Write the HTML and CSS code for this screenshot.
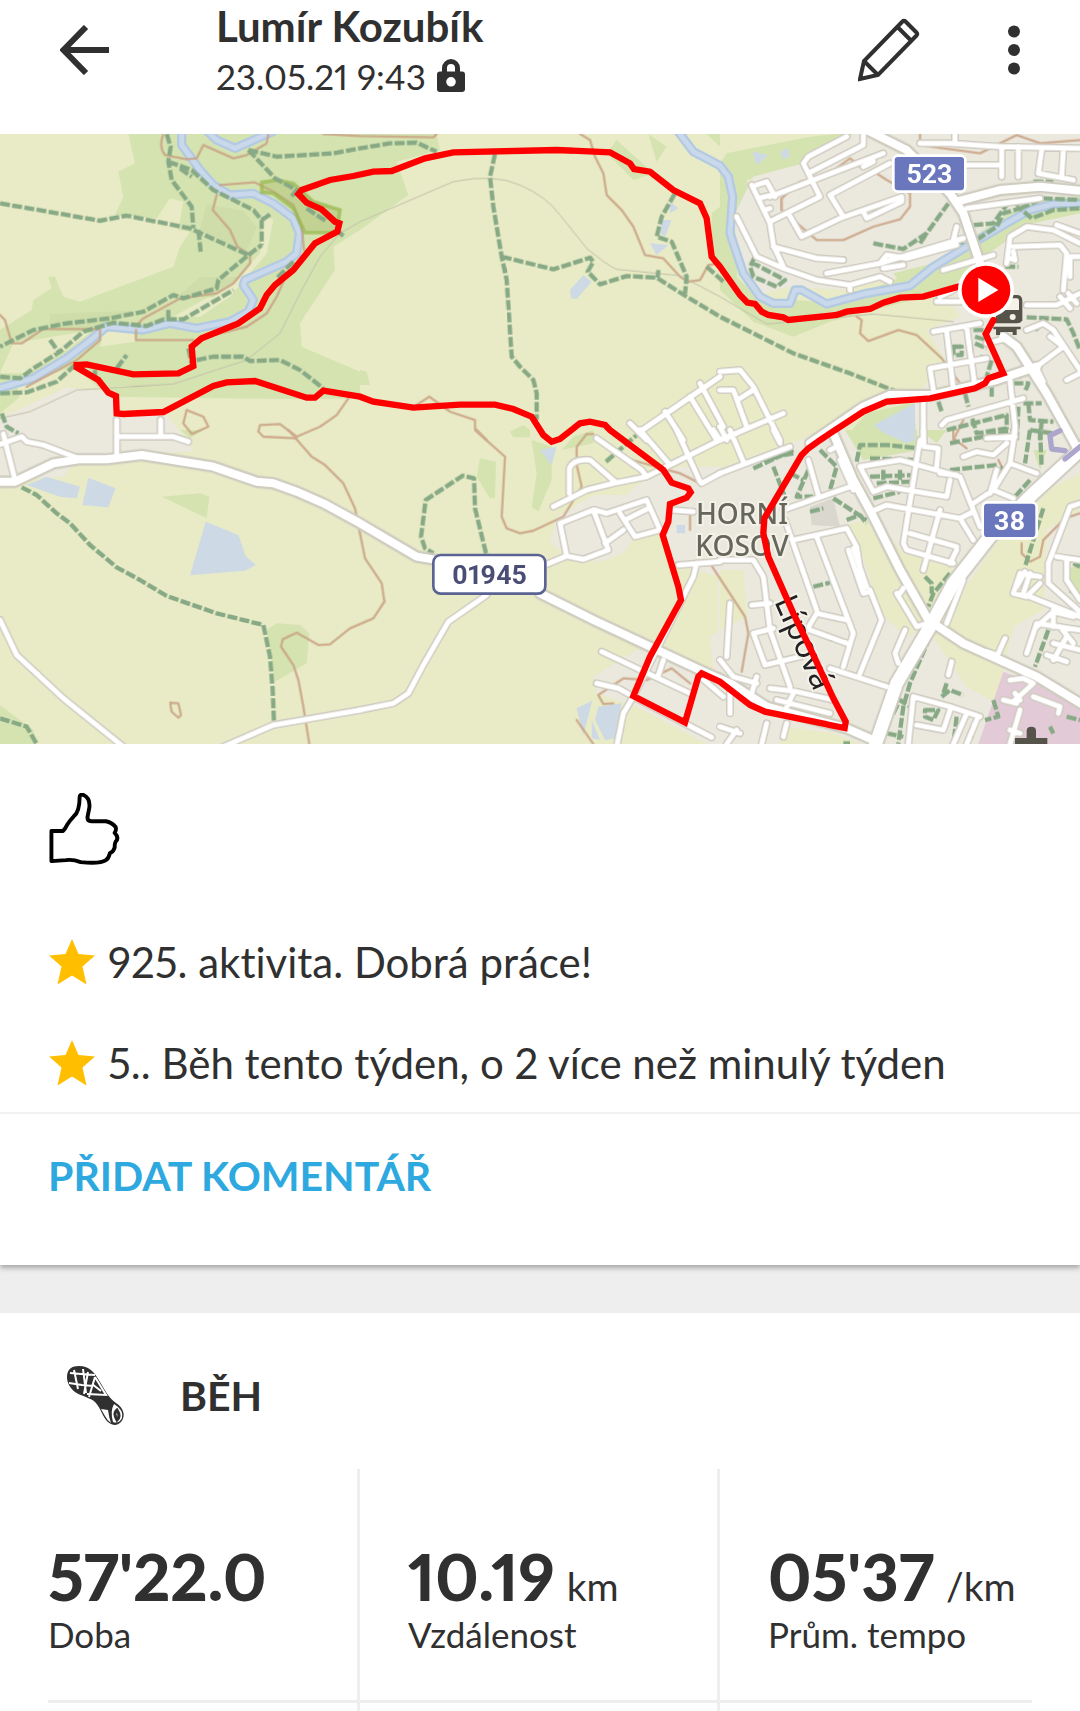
FILE: index.html
```html
<!DOCTYPE html>
<html lang="cs">
<head>
<meta charset="utf-8">
<meta name="viewport" content="width=device-width, initial-scale=1">
<title>Lumír Kozubík – Běh</title>
<link rel="stylesheet" href="styles.css">
</head>
<body>
<header class="topbar">
  <button class="icon-button back" type="button" aria-label="Zpět">
    <svg width="50" height="50" viewBox="0 0 50 50"><path d="M49 25H5M26 2L3.500 25L26 48" class="line line-arrow"/></svg>
  </button>
  <div class="who">
    <h1 class="name">Lumír Kozubík</h1>
    <p class="date"><span>23.05.21 9:43</span>
      <svg width="28" height="34" viewBox="0 0 28 34"><path d="M7.500 14V9a6.500 6.500 0 0 1 13 0v5" class="line line-lock"/><path class="solid" fill-rule="evenodd" d="M3 12.500H25a3 3 0 0 1 3 3V30a3 3 0 0 1-3 3H3a3 3 0 0 1-3-3V15.500a3 3 0 0 1 3-3ZM14 18a4.800 4.800 0 1 0 0 9.600a4.800 4.800 0 0 0 0-9.600Z"/></svg>
    </p>
  </div>
  <button class="icon-button edit" type="button" aria-label="Upravit">
    <svg width="62" height="64" viewBox="0 0 62 64"><path class="line line-pencil" d="M2 61L6 43L44.500 3.500Q46 2 47.500 3.500L58.500 14.500Q60 16 58.500 17.500L20 57ZM6 43L20 57M39.500 9L53 22.500"/></svg>
  </button>
  <button class="icon-button more" type="button" aria-label="Další">
    <svg width="14" height="50" viewBox="0 0 14 50"><g class="solid"><circle cx="7" cy="6.500" r="6"/><circle cx="7" cy="25" r="6"/><circle cx="7" cy="43.500" r="6"/></g></svg>
  </button>
</header>

<main>
<svg class="map" viewBox="0 0 3240 1830" role="img" aria-label="Mapa trasy">
  <defs>
    <g id="minor">
      <g transform="translate(0 888)"><path d="M0 570L50 675L190 805L370 950M670 950L820 885L1080 840M-20 50L65 20L80 35L130 45L235 85M10 12L45 150M350 -30V80M350 20H520L565 35M482 -30V20"/></g>
      <g transform="translate(1080 -12)"><path d="M840 905L1080 740M810 880L860 930M915 845L970 930M990 800L1070 930M1020 760L1090 890"/></g>
      <g transform="translate(1080 888)"><path d="M0 840L100 820L145 790L190 705L265 575L380 495M580 230L680 180L760 160L860 140L920 110L1080 30M628 190V115Q640 85 690 90L765 155M710 25L845 120L860 140M840 0L930 105M950 0L1020 155M1060 0L1080 30M1025 160L1080 130M600 280L700 240L745 360L670 388L620 378ZM705 240L740 250L860 210L900 300L825 320L780 250M795 270L865 235M735 340L790 300M555 405L620 378M935 240L1000 245M955 405L1080 395M1010 400L1000 440L870 700L820 800L790 850L770 950M725 665L990 790M710 760L775 775L820 800L1055 922M910 690L895 735M1020 740L1090 800"/></g>
      <g transform="translate(2160 -12)"><path d="M430 12V45L265 130L250 100L265 80L380 20M265 130L300 200L150 275M150 200L490 70M330 195L510 100M330 195L370 260M205 250L245 320L360 265L545 200L545 215L440 265L430 245M95 165L150 280L160 345L190 410M110 165L140 155L165 200M115 205L155 195M135 240L150 235M50 260L110 380L190 415L290 450L390 465L480 440L510 455M160 350L290 385L370 390M320 430L480 400L730 325M480 400L500 375L560 385L710 345M490 415L550 405M670 420L820 375M390 465V480M430 110L460 95M600 40L690 40L840 50L1080 55M705 12V40M845 50V140M895 50V140M965 60L955 130L1060 150M1030 60L1025 140M740 105H840M740 235L960 205M860 400L870 320L920 290L1000 300L1080 340M880 350L1020 345L1040 370L1030 480M870 385L885 390L880 365M1050 440V380H1080M710 290L700 330M650 515H720M700 480L660 500M920 525H1010L1080 490M1020 500L1050 535M1045 490L1070 520M1010 285L1080 310M640 605L780 580M680 605L700 780M640 780L630 715L800 685M740 590L765 770M610 810V930M665 885L680 870L910 805M870 750L885 890L880 930M800 640L860 625M950 710L1030 650L990 620M950 715L970 755M920 600L970 580L1000 600L1080 720M1040 750L1080 730M0 725L60 720L100 770L180 930M0 780L40 780L80 890M60 805L100 780M0 930L190 850M0 890L20 930"/></g>
      <g transform="translate(2160 888)"><path d="M0 130L210 50M30 0L70 95M160 0L180 40M0 30L50 10M265 90L295 195M190 240L405 165M330 60L350 50M360 90L400 180M420 110L540 90L720 140L780 290M420 110L460 185L500 170L680 200L690 150M600 30L550 340L560 360L700 400M465 240L500 225L720 265L760 330M720 265L760 245M660 240L610 420M570 310L710 350M710 360L690 400M610 0L612 50L655 55L650 110M660 130L710 135M730 80L770 65L820 75L860 40M800 25L885 20M885 0L870 100L820 180L760 220M830 120L810 190M870 100L950 130M820 180L880 205M220 330L380 295L410 350L430 480M385 360L430 490L450 485M400 355L440 470M0 390L100 390L130 440L150 600L210 770M195 270L290 540M290 320L400 610L370 710M450 480L485 570L420 730M330 715L500 770M260 600L290 550L380 570M100 610L135 705L240 680M100 610L160 595M270 600L380 640M30 520L20 680M95 525L150 520M555 600L525 670L535 700M530 490L590 590L620 580M550 475L540 490M730 450L680 580M0 690L40 740L110 760M110 740L95 790M150 775L230 785L340 810M170 810L330 850M220 790L200 830M30 770L30 850M140 880L125 942M50 900L20 942M0 890L60 910M200 880L190 920M580 800L690 830L780 860M580 800L565 942M590 885L670 900L690 840M740 850L700 942M770 870L740 942M685 735L695 695M855 625L835 670M800 665L830 675M920 670L950 580L1080 600M950 590L1000 545L1060 560M1020 590L1060 640M900 430L880 490L920 500L960 460M900 430L960 440M915 425L890 470M930 430L910 490M930 500L1080 560M1080 220L1050 230L985 400V460L1080 545M1010 380L1080 390M1040 390V450L1080 510M1000 540V590M1040 620L1000 690M980 675L1040 695M1000 640L1080 660M870 750L910 745L940 760L880 815M850 810L890 820M885 790L900 810M940 800L1020 830L1015 850M900 840L870 942M870 900L900 910"/></g>
    </g>
    <g id="major">
      <g transform="translate(0 888)"><path d="M-10 155H45L160 100L235 88H320L425 75L640 110L770 155L820 160L890 185L970 220L1080 280L1250 380L1320 392M1620 490L1780 570L2110 725L2200 765L2300 830L2540 895L2630 935"/></g>
      <g transform="translate(2160 -12)"><path d="M440 0L560 60L690 190L730 250L780 400M850 620L890 650L980 790L1080 970M710 215L840 180L960 170L1080 182M270 940L430 830L510 795H640L830 750L950 710"/></g>
      <g transform="translate(2160 888)"><path d="M340 10L400 150L460 260L540 420L625 570L730 640L840 690L950 740L1090 825"/></g>
    </g>
    <path id="trunk" d="M3260 930L3100 1078L2970 1208L2860 1348L2790 1478L2690 1648L2620 1850"/>
    <path id="river" d="M545 -10V33L600 108L640 153L690 183L760 178L820 208L880 253L898 298L890 358L860 383L735 438L730 453L760 498L745 533L690 563L590 583L510 568L430 588L320 578L260 628L200 673L100 733L-10 765M610 -20L650 18L705 43L820 -8M2025 -20L2080 53L2160 95L2185 128L2198 188L2190 298L2230 418L2280 488L2320 508H2370L2385 468H2405L2480 510L2600 478L2730 455L2800 398L2900 338L3020 268L3090 228L3160 210L3250 208"/>
  </defs>

  <!-- land cover -->
  <rect class="field" width="3240" height="1830"/>
  <g class="wood">
    <path transform="translate(0 -12)" d="M385 12L405 100L355 125L370 200L345 255L470 265L510 205L550 215L535 300L570 305L540 350L520 410L400 455L240 515L190 500L165 440H145L155 475L100 510L95 540L0 600V850L60 800L300 770L340 800L920 808L1080 805V725L905 650L900 580L1005 420L1000 350L1080 300L1225 195L1190 95L1320 60L1310 12Z"/>
    <path transform="translate(1080 -12)" d="M865 12L920 50L890 95ZM740 70L770 30L880 130L820 150ZM0 720L20 725L30 765H0ZM1055 250L1080 230V420L1055 370ZM450 905L490 885L510 900V922H460ZM950 12H980L1000 60ZM1040 12H1080V50Z"/>
    <path transform="translate(2160 -12)" d="M0 100L20 70L270 20L350 12H450L250 110L80 150L130 340L60 260L50 450L0 400ZM0 390L110 500L340 520L600 420L740 400L720 470L500 530L330 575L220 620L100 575L0 480ZM370 930L440 850L590 815V930ZM740 160L840 130L1080 150V180L840 190ZM760 300L920 220L1080 220V270L940 290L780 350Z"/>
    <path transform="translate(0 888)" d="M485 200L600 190L628 200L620 265ZM800 600L830 580L900 585L928 610L920 700L825 755ZM0 825L100 900L110 942H0ZM540 0H610L570 25Z"/>
    <path transform="translate(1080 888)" d="M515 30L575 50V150L535 245L515 230L530 130ZM360 85L408 95L405 205L390 205L350 140ZM605 60L640 20L700 0L700 40Z"/>
  </g>
  <g class="field">
    <path transform="translate(0 -12)" d="M790 250L820 270L800 370L750 430L690 500L600 560L520 560L700 460L780 370ZM40 640L280 600L200 660L80 730L0 730ZM310 605L400 600L405 635L300 650ZM50 770L220 710L330 800L200 780L60 810Z"/>
  </g>
  <g class="wood-dark">
    <path d="M600 430H720L640 490H530ZM150 540L400 530L300 590L150 590ZM620 210L730 230L770 280L740 350L600 290Z"/>
  </g>
  <g class="town">
    <path transform="translate(0 -12)" d="M0 865L200 772L330 785L350 855H500L560 930L580 965L420 970L230 990L190 1040L0 1050Z"/>
    <path transform="translate(1080 888)" d="M570 340L590 260L700 195H800L830 165L960 110L1080 110V440L930 400L900 290L830 310L790 370L720 395L640 385ZM700 740L830 660L880 640L1080 740V942H1040L830 830L710 790ZM1050 620L1080 600V740L1060 730Z"/>
    <path transform="translate(2160 -12)" d="M400 12H1080V935H590L580 800L680 700L620 600L720 560L670 480L540 440L370 480L210 470L130 490L60 400L40 260L100 140L250 100Z"/>
    <path transform="translate(2160 888)" d="M-5 110L240 30L300 0H1080V942H-5Z"/>
  </g>
  <g class="wood"><path transform="translate(2160 -12)" d="M520 430L640 400L850 260L940 210L1080 200V250L940 280L760 400L700 470L560 485Z"/></g>
  <g class="field" transform="translate(2160 888)">
    <path d="M375 285L440 270L620 590L560 620L480 550L420 350ZM470 270L550 370L700 410L630 560ZM650 590L830 340L1000 170L1080 130V240L980 300L970 540L880 590L850 710L830 820L740 770L640 620ZM0 420L70 420L80 560L0 600ZM190 890L340 910L420 942H180ZM0 0H110L200 40L0 115Z"/>
  </g>
  <path class="wood" transform="translate(2160 888)" d="M375 0H590L600 60L430 90ZM1040 420L1080 400V510ZM600 0H680L650 40ZM940 60L980 60L960 120Z"/>
  <path class="block" transform="translate(2160 888)" d="M270 230L340 205L360 290L275 285Z"/>
  <path class="pink" transform="translate(2160 888)" d="M850 725L1080 810V942H775Z"/>
  <g class="pond">
    <path transform="translate(1080 -12)" d="M633 505L630 480L670 435L695 455L650 507ZM905 270H935L915 320L900 310ZM870 340L925 345L890 375ZM930 215L955 235L930 250Z"/>
    <path transform="translate(0 888)" d="M80 165L140 140L240 170L230 205L180 200ZM265 143L347 175L325 232L247 225ZM617 275L715 315L737 378L768 405L735 422L570 436Z"/>
    <path transform="translate(1080 888)" d="M540 60L590 50L575 105ZM650 835L697 812L670 915ZM715 830L785 820L770 925L735 930L705 870ZM695 870L720 930L695 925ZM950 285H975V310H950Z"/>
    <path transform="translate(2160 -12)" d="M462 885L585 820V930L560 940L485 905ZM97 65L145 75L110 105ZM180 65L205 55L208 80L190 88Z"/>
  </g>

  <use href="#river" class="river-bank"/><use href="#river" class="river-core"/>

  <g class="contour">
    <path transform="translate(0 -12)" d="M490 12Q475 50 495 75L560 88L590 85L610 45L700 85L740 75L800 40L805 12M660 165L765 157L820 185L880 225L905 290L912 360M650 195L638 240L690 300L712 350L750 375V400L700 460L650 490L540 505L430 565L415 580M408 600V630H580M600 625L740 590L800 550L830 500L850 455M0 555L15 570L35 640H65L130 597H300V630L230 690L80 770M560 840L610 860L625 890L575 912L550 880ZM780 885L840 882L890 920L960 890L1010 855L1045 805M780 885L775 905L790 920L890 925M970 12L1080 18L1300 22L1310 12"/>
    <path transform="translate(1080 -12)" d="M660 12L690 30L705 80L730 130L740 195L785 240L820 290L855 375L910 385L960 440L985 455L1020 450L1045 405L1080 400M170 825L208 800L270 845L345 870V895L380 930"/>
    <path transform="translate(0 888)" d="M865 0L935 80L975 105L1030 160L1065 235L1095 385L1145 460L1153 515L1120 565L1050 595L990 643L955 645L890 608L848 628L843 650L880 705L895 750L910 830L928 942M510 818L535 820L543 855L535 863L515 845Z"/>
    <path transform="translate(1080 888)" d="M345 0L435 80L425 260L440 295L480 310L520 302L610 260L665 170L650 105V50L680 12H700M780 80L960 130L1020 160M760 820L730 822L715 795L790 745L860 750L935 715L990 760M650 870L700 942M1050 400L1155 560L1165 610L1145 725M990 240V300"/>
    <path transform="translate(2160 -12)" d="M185 240V205L240 155L330 130L390 85L420 110M185 240L290 330H370L460 290L540 268L570 230V190L500 150L470 130M410 560L425 570L420 610L445 633L535 600L590 615L665 685L720 760M600 12V45L780 70L890 15L960 40L1080 30M690 720L720 760M700 930L730 870"/>
    <path transform="translate(2160 888)" d="M1080 250L1035 265L970 330L960 380L930 395L905 370V340M700 0L700 25L740 55M835 90L845 110"/>
  </g>

  <path class="rail" d="M0 853L90 833L230 768L520 750L740 678L840 598L900 478L960 368L1020 298L1080 263L1360 143Q1480 118 1560 153Q1640 188 1680 243L1760 343Q1820 393 1850 406L2040 425L2160 488L2300 570L2620 540L2860 563"/>
  <path class="reserve" d="M785 175V145L830 138L880 148L940 203L1020 228L1010 296H915L880 223L820 178Z"/>

  <g class="track">
    <path transform="translate(0 -12)" d="M500 12L512 50L505 95L515 150L575 230L580 295M505 95L575 120L640 180L760 240L785 270V345M785 270L815 250M540 115L575 140M745 60L830 80L1000 70L1080 55L1170 40L1250 38L1310 65M745 60L825 145L890 180L870 205M920 235L980 275M1015 305L1030 318M0 220L300 272L380 257L570 295L745 375L655 450L650 475L550 505L520 495L430 545L330 565L200 580L100 600L0 650M595 300L602 365M745 375L785 345M0 740L60 745L100 715L180 665L250 605L340 578L440 588L490 568H550L700 480M505 540V568M150 630L175 665M0 790L80 787L170 755L230 700M350 715L380 675M590 690L640 680H730L750 693L840 690L900 720L970 775M565 655L575 700M285 720V745M880 395L830 445M5 850L20 890L55 910"/>
    <path transform="translate(1080 -12)" d="M405 72L390 140L400 230L425 380L440 450L455 680L480 710L520 750L530 790V870M425 380L580 418L690 383L700 395L683 425L720 463L800 438L890 443L980 500L1080 560L1300 670L1470 730L1610 785M945 190L905 260L890 320L935 335L980 440L975 490M1040 410L1090 455M895 420L893 443"/>
    <path transform="translate(0 888)" d="M65 172L110 195L170 250L210 280L270 345L350 412L420 450L500 498L650 550L790 585L810 680L818 780L822 880M0 865L80 890L110 942"/>
    <path transform="translate(1080 888)" d="M378 370L345 235L342 145L308 137L197 210L183 320L195 355L220 370M738 95L830 15"/>
    <path transform="translate(2160 -12)" d="M105 380L90 410L100 440L170 470L195 450L100 400M460 340L550 357L620 310L685 220M600 340L620 310M570 380L730 335M760 285L820 280L870 210L910 235M770 330L830 290L850 250L900 235L935 265L1000 240L1080 235M900 235L970 205L1080 210M940 155H1000M855 410H895M920 562L1040 568L1060 610L1080 660M945 600L975 575M700 650H725V675H700ZM760 600H800M765 620L800 630M780 680L815 690L800 740M765 640L800 655M815 770V805M735 790L745 830M655 815L665 845M680 900L860 855V895L770 910L755 860M880 760H925L915 785M910 820L965 820M925 820L930 870L1000 875M895 830L890 930M965 870L960 930M930 900L1000 910"/>
    <path transform="translate(2160 888)" d="M630 620L570 760L550 830L535 942M690 430L640 490L625 530M615 440L635 460V490M690 40L890 0M690 120L830 105M850 110L820 170M930 0L915 100M960 0L965 110M930 150L885 200M970 235L915 410M280 470L330 458M985 600L945 710M100 115L220 60M120 90L220 70M160 110L200 215M300 60L350 110L330 180M265 120L230 200L280 200M210 130L250 150M340 205L440 270M380 270L420 255L440 280M270 245L310 235M410 95L420 45L500 45L600 55M450 140L580 135M470 160L570 155M490 120V150M540 120V150M460 205L540 185M450 85L590 90M665 800L690 780L730 795M680 760L670 790M820 810L835 860L795 870M615 840H655L640 870L615 860ZM500 910L550 920M520 850L540 810L570 830M710 860L700 942M755 895L740 942M1040 860L1080 870M990 890L1000 910M1060 400L1080 410M1050 480L1080 500M370 940H390"/>
  </g>

  <use href="#minor" class="minor-case"/>
  <use href="#major" class="major-case"/>
  <use href="#trunk" class="trunk-case"/>
  <use href="#minor" class="minor-fill"/>
  <use href="#major" class="major-fill"/>
  <use href="#trunk" class="trunk-fill"/>
  <path class="motor" d="M3250 930L3195 975M3180 890L3150 905L3155 945L3195 950"/>

  <g class="place">
    <text x="2226" y="1169">HORNÍ</text>
    <text x="2226" y="1265">KOSOV</text>
  </g>
  <text class="street-name" transform="translate(2322 1402) rotate(66)">Lípová</text>

  <g class="station">
    <path class="station-line" d="M3000 488H3050Q3062 488 3062 500V556H2980"/>
    <path d="M2990 528H3065V558Q3065 568 3050 568H2985ZM2980 578H3062V586H3050V603H3038V594H3000V603H2988V586H2980Z"/>
    <circle class="lamp" cx="3038" cy="549" r="9"/>
    <path d="M3080 1790Q3080 1778 3094 1778Q3108 1778 3108 1790V1812H3142V1830H3045V1812H3080Z"/>
  </g>

  <g class="shield">
    <rect x="2680" y="65" width="216" height="108" rx="14"/>
    <text x="2788" y="146">523</text>
    <rect x="2948" y="1105" width="162" height="108" rx="14"/>
    <text x="3029" y="1187">38</text>
  </g>
  <g class="shield shield-white">
    <rect x="1300" y="1263" width="336" height="116" rx="22"/>
    <text x="1468" y="1349">01945</text>
  </g>

  <path class="route" d="M2875 458L2770 488L2700 491L2650 506L2610 525L2540 533L2510 543L2365 558L2350 550L2305 543L2285 533L2265 510L2242 506L2220 483L2160 398L2135 368L2120 253L2100 208L2020 168L1950 113L1902 105L1890 88L1830 55L1670 48L1360 55L1275 73L1175 111L1120 113L1060 126L990 138L905 168L895 180L920 206L965 226L1005 263L1018 268L1012 293L945 328L880 408L825 453L800 483L780 523L715 568L605 613L575 638L580 696L535 718L400 721L260 691L230 693V700L295 738L325 776L348 786L350 838L370 840L490 834L640 756L680 745L765 741L920 791H945L970 770L1080 788L1120 803L1240 821L1380 812H1485L1540 825L1595 848L1630 903L1655 923L1680 915L1740 868L1770 863L1815 873L1830 888L1990 1008L2015 1046L2065 1063L2072 1075L2060 1091L2010 1110L2005 1163L1988 1203L2035 1358L2043 1398L1950 1568L1900 1686L2055 1765L2095 1628L2105 1618L2160 1643L2250 1713L2295 1733L2534 1782L2537 1763L2500 1693L2440 1563L2380 1438L2305 1268L2290 1198L2293 1153L2405 963L2425 943L2460 918L2590 833L2660 803L2790 793L2925 763L2955 748L2965 733L3010 718L2957 600L2980 558"/>
  <circle class="start-ring" cx="2958" cy="468" r="84"/>
  <circle class="start" cx="2958" cy="468" r="73"/>
  <path class="start-ring" d="M2935 431V504L2995 468Z"/>
</svg>

<section class="card reactions">
  <div class="social">
    <button class="icon-button like" type="button" aria-label="To se mi líbí">
      <svg width="71" height="72" viewBox="0 0 72 74"><path class="line line-like" d="M2 39H14Q16 37 18 33Q21 28 25 24Q31 19 31 4Q31 1 35 2Q42 5 41 15L39 25Q39 29 43 29H58Q64 30 68 35Q69 38 67 41Q72 46 68 50Q67 52 67 56Q66 60 62 62Q61 67 58 69Q52 73 32 71Q24 68 17 69L2 70Z"/></svg>
    </button>
    <ul class="feats">
      <li class="feat"><svg width="46" height="46" viewBox="0 0 46 46"><path class="star" d="M23 0L29.500 15L46 16.500L33.500 27.500L37.500 45.500L23 36.500L8.500 45.500L12.500 27.500L0 16.500L16.500 15Z"/></svg><span>925. aktivita. Dobrá práce!</span></li>
      <li class="feat"><svg width="46" height="46" viewBox="0 0 46 46"><path class="star" d="M23 0L29.500 15L46 16.500L33.500 27.500L37.500 45.500L23 36.500L8.500 45.500L12.500 27.500L0 16.500L16.500 15Z"/></svg><span>5.. Běh tento týden, o 2 více než minulý týden</span></li>
    </ul>
  </div>
  <div class="comment"><button class="comment-button" type="button">PŘIDAT KOMENTÁŘ</button></div>
</section>

<section class="card summary">
  <div class="sport">
    <svg width="60" height="62" viewBox="0 0 60 62">
      <path class="solid" d="M1 12C1 4 6 1 13 1C24 1 29 8 34 17C40 27 43 33 50 38C58 43 60 51 55 57C50 62 44 60 40 55C35 48 34 42 29 37C25 33 15 31 9 27C4 23 1 18 1 12Z"/>
      <path class="tread" d="M4 8L15 9L29 10M3 18L16 20L27 21M8 5L12 24M17 4L20 28M22 7L18 29M29 12L23 32M29 12L40 30L21 29M26 19L35 26"/>
      <path class="paper" d="M35 44L42 45Q43 53 45 58Q41 55 39 51ZM48 39Q44 46 47 57Q53 59 56 53Q58 45 48 39Z"/>
      <path class="line line-sole" d="M51 45Q47 48 51 55Q55 51 51 45Z"/>
    </svg>
    <h2 class="sport-name">BĚH</h2>
  </div>
  <div class="stats">
    <div class="stat"><p class="value">57'22.0</p><p class="label">Doba</p></div>
    <div class="stat"><p class="value">10.19 <span class="unit">km</span></p><p class="label">Vzdálenost</p></div>
    <div class="stat"><p class="value">05'37 <span class="unit">/km</span></p><p class="label">Prům. tempo</p></div>
  </div>
  <hr class="rule">
  <div class="stats" aria-hidden="true">
    <div class="stat-gap"></div><div class="stat-gap"></div><div class="stat-gap"></div>
  </div>
</section>
</main>
</body>
</html>
```
FILE: styles.css
```css
* { box-sizing: border-box; }
body {
  margin: 0;
  background: #eee;
  color: #303030;
  font-family: Lato, "Open Sans", sans-serif;
  font-variant-ligatures: none;
  font-variant-numeric: proportional-nums;
}
h1, h2, p, ul { margin: 0; padding: 0; }
button { margin: 0; padding: 0; border: 0; background: none; color: inherit; font: inherit; cursor: pointer; }
svg { display: block; }
.line { fill: none; stroke: #303030; }
.solid { fill: #303030; }

/* top bar */
.topbar { display: flex; align-items: flex-start; padding: 2px 59px 0 60px; height: 134px; background: #fff; }
.back { margin: 23px 106px 0 0; }
.who { flex: 1; }
.name { font-size: 42px; line-height: 48px; font-weight: 700; }
.date { display: flex; align-items: center; gap: 11px; font-size: 35px; line-height: 52px; }
.edit { margin: 16px 87px 0 0; }
.more { margin-top: 23px; }
.line-arrow { stroke-width: 6; }
.line-lock { stroke-width: 5; }
.line-pencil { stroke-width: 4; }

/* map */
.map { width: 100%; height: auto; font-family: Roboto, sans-serif; }
.field { fill: #e8ebc5; }
.wood { fill: #d5e3b1; }
.wood-dark { fill: #cfddaa; }
.town { fill: #ebe8dd; }
.block { fill: #d9d7ce; }
.pink { fill: #e2cbd6; }
.pond { fill: #cddae6; }
.river-bank, .river-core, .contour, .rail, .track, .route, .motor,
.minor-case, .minor-fill, .major-case, .major-fill, .trunk-case, .trunk-fill {
  fill: none; stroke-linejoin: round; stroke-linecap: round;
}
.river-bank { stroke: #b3cae2; stroke-width: 28; }
.river-core { stroke: #c9d8eb; stroke-width: 14; }
.contour { stroke: #c9a183; stroke-width: 7; opacity: .85; }
.rail { stroke: #c2bfa9; stroke-width: 3; }
.reserve { fill: #a5b864; fill-opacity: .4; stroke: #97b84b; stroke-opacity: .7; stroke-width: 11; }
.track { stroke: #87a985; stroke-width: 13; stroke-linecap: butt; stroke-dasharray: 30 7; }
.minor-case { stroke: #cfcbc1; stroke-width: 24; }
.minor-fill { stroke: #fff; stroke-width: 15; }
.major-case { stroke: #cfccc0; stroke-width: 38; }
.major-fill { stroke: #fff; stroke-width: 24; }
.trunk-case { stroke: #cfccc0; stroke-width: 50; }
.trunk-fill { stroke: #fff; stroke-width: 38; }
.motor { stroke: #aca5cc; stroke-width: 16; }
.route { stroke: #f00; stroke-width: 19; stroke-linejoin: miter; }
.place { fill: #66665c; font: 500 84px "Noto Sans", sans-serif; text-anchor: middle; paint-order: stroke; stroke: #f3f1e8; stroke-width: 12; }
.street-name { fill: #222; font: 98px "Noto Sans", sans-serif; paint-order: stroke; stroke: #f3f1e8; stroke-width: 12; }
.station { fill: #55534a; }
.station-line { fill: #f5f2e8; stroke: #55534a; stroke-width: 10; }
.lamp { fill: #f5f2e8; }
.shield { fill: #fff; font-weight: 700; font-size: 80px; text-anchor: middle; }
.shield rect { fill: #6b77bd; stroke: #fff; stroke-width: 8; }
.shield-white { fill: #4a4e75; }
.shield-white rect { fill: #fff; stroke: #5b6394; }
.start { fill: #f00; }
.start-ring { fill: #fff; }

/* reactions and comments */
.card { background: #fff; }
.reactions { box-shadow: 0 3px 5px rgba(0, 0, 0, .3); }
.social { padding: 49px 49px 19px; border-bottom: 2px solid #f2f2f2; }
.line-like { stroke: #000; stroke-width: 4; stroke-linejoin: round; }
.feats { list-style: none; margin-top: 64px; display: grid; gap: 41px; }
.feat { display: flex; align-items: center; gap: 13px; font-size: 42px; line-height: 60px; }
.star { fill: #ffbf00; }
.comment { padding: 32px 48px 59px; }
.comment-button { color: #2ea9e0; font-size: 41px; line-height: 60px; font-weight: 700; }

/* activity summary */
.summary { margin-top: 48px; }
.sport { display: flex; align-items: center; gap: 54px; padding: 47px 66px 37px; }
.sport-name { font-size: 41px; line-height: 72px; font-weight: 700; }
.tread { fill: none; stroke: #fff; stroke-width: 2; }
.paper { fill: #fff; }
.line-sole { stroke-width: 3; }
.stats { display: grid; grid-template-columns: repeat(3, 1fr); }
.stat { padding: 71px 0 44px 48px; }
.stat-gap { height: 9px; }
.stat, .stat-gap { border-right: 3px solid #eee; }
.stat:last-child, .stat-gap:last-child { border-right: 0; }
.value { display: flex; align-items: baseline; gap: 12px; font-size: 65px; line-height: 72px; font-weight: 900; white-space: nowrap; }
.unit { font-size: 39px; line-height: 40px; font-weight: 400; }
.label { font-size: 35px; line-height: 44px; }
.rule { margin: 0 48px; border: 0; height: 3px; background: #eee; }
```
